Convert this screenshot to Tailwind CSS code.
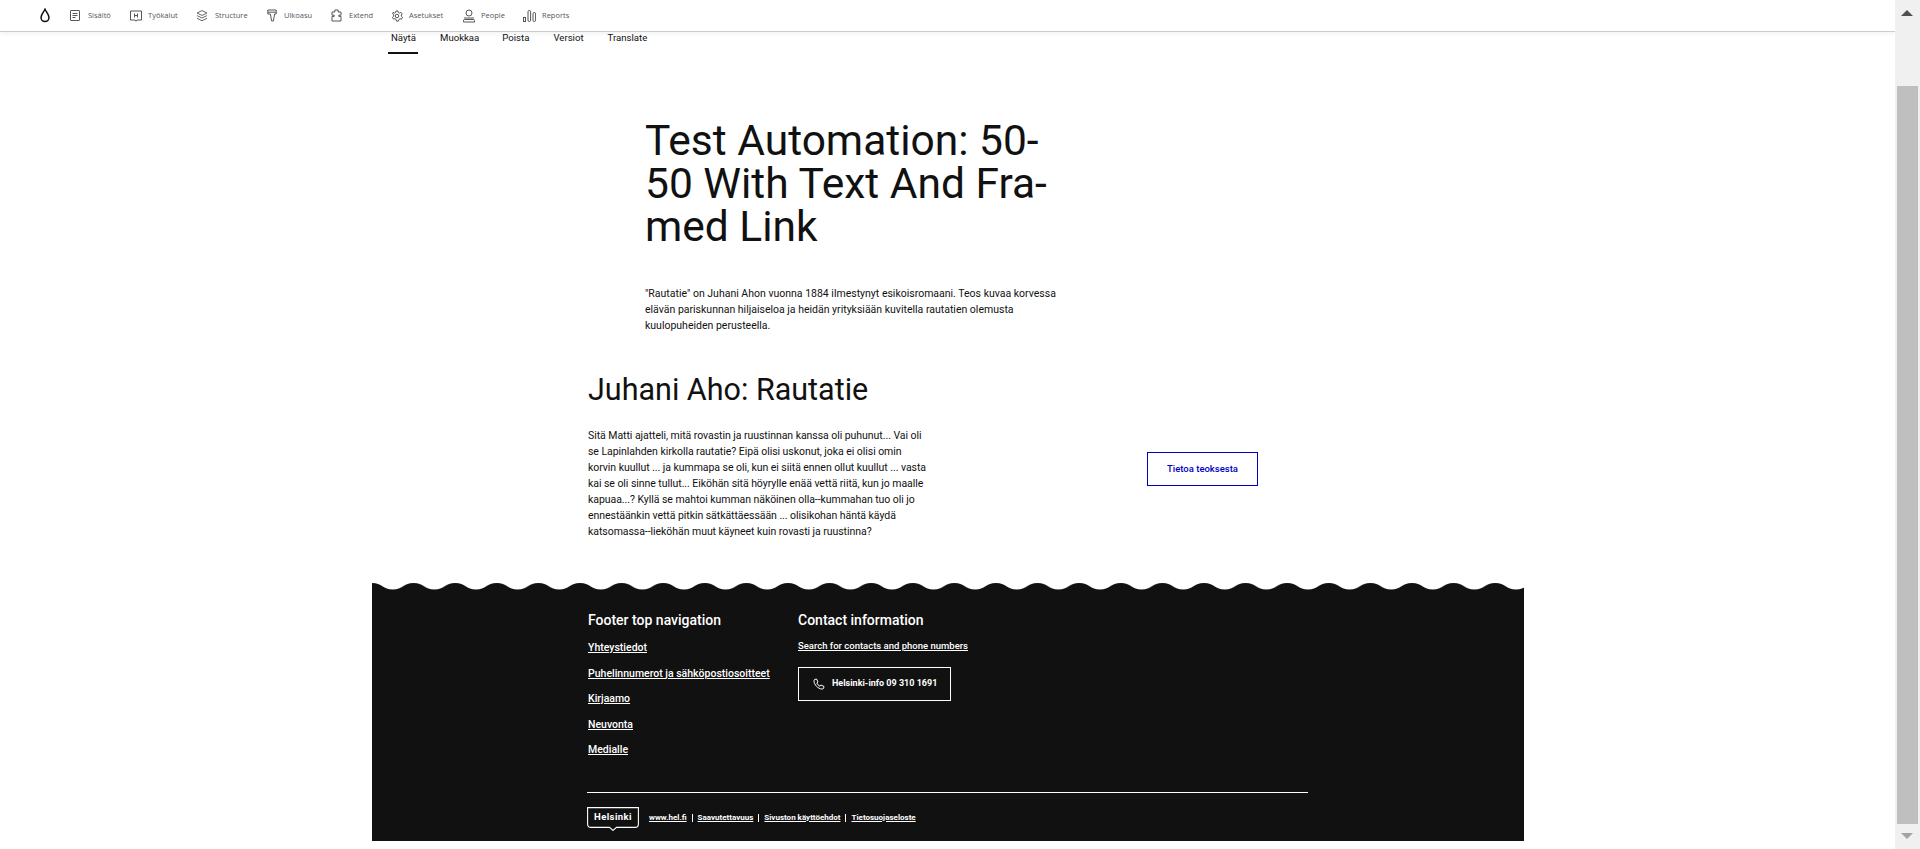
<!DOCTYPE html>
<html lang="fi">
<head>
<meta charset="utf-8">
<title>Test Automation: 50-50 With Text And Framed Link</title>
<script src="https://cdn.jsdelivr.net/npm/@tailwindcss/browser@4"></script>
</head>
<body class="h-[849px] overflow-hidden bg-white font-['Roboto',sans-serif] text-[#111]">
<div class="flex h-[849px]">
    <div class="flex-1 min-w-0 flex flex-col">
        <!-- Admin toolbar -->
        <nav class="h-[32px] shrink-0 flex items-center pl-[40px] border-b border-[#ccc] shadow-[0_2px_4px_rgba(0,0,0,0.05)] font-['Open_Sans',sans-serif] text-[7.5px] text-[#55565b]">
            <svg class="w-[10px] h-[15px] mr-[20px]" viewBox="0 0 10 15" fill="none" stroke="#111" stroke-width="1.5"><path d="M5 1.2C3.8 4 1 6.4 1 9.6a4 4 0 0 0 8 0C9 6.4 6.2 4 5 1.2z"/></svg>
            <a class="w-[60px] flex items-center gap-[8px]">
                <svg class="w-[10px] h-[11px]" viewBox="0 0 10 11" fill="none" stroke="#55565b"><rect x=".5" y=".5" width="9" height="10" rx=".5"/><path d="M2.5 3.5h5M2.5 5.5h5M2.5 7.5h3"/></svg>
                Sisältö
            </a>
            <a class="w-[66px] flex items-center gap-[6px]">
                <svg class="w-[12px] h-[12px]" viewBox="0 0 12 12" fill="none" stroke="#55565b"><path d="M.5 1h11v9H7l-1 1.2L5 10H.5z"/><path d="M4.5 3.5v4M7.5 3.5v4M4.5 5.5h3"/></svg>
                Työkalut
            </a>
            <a class="w-[71px] flex items-center gap-[7px]">
                <svg class="w-[12px] h-[12px]" viewBox="0 0 12 12" fill="none" stroke="#55565b" stroke-width=".9"><path d="M6 .6 11 3 6 5.4 1 3zM1 5.6l5 2.4 5-2.4M1 8.2l5 2.6 5-2.6"/></svg>
                Structure
            </a>
            <a class="w-[63px] flex items-center gap-[7px]">
                <svg class="w-[10px] h-[13px]" viewBox="0 0 10 13" fill="none" stroke="#55565b"><path d="M.8 1h8.4v4H7.6L6.4 12H4.6L3.4 5H.8zM1 3.2h8"/></svg>
                Ulkoasu
            </a>
            <a class="w-[61px] flex items-center gap-[6px]">
                <svg class="w-[13px] h-[13px]" viewBox="0 0 13 13" fill="none" stroke="#55565b"><path d="M4.8 3V1h3.4v2H11v3.2H8.8v1.2H11v4.6H2V7.4h2.2V6.2H2V3z"/></svg>
                Extend
            </a>
            <a class="w-[71px] flex items-center gap-[6px]">
                <svg class="w-[12px] h-[12px]" viewBox="0 0 24 24" fill="none" stroke="#55565b" stroke-width="2"><circle cx="12" cy="12" r="3.5"/><path d="M10 2h4l.6 3 2.6 1.2 2.7-1.6 2.6 3.2-2 2.2.3 2.8 2.2 1.8-2 3.6-3-.8-2.3 1.8-.7 3h-4l-.7-3-2.4-1.8-3 .8-2-3.6 2.3-1.8.3-2.8-2-2.2L4 4.6l2.8 1.6L9.4 5z"/></svg>
                Asetukset
            </a>
            <a class="w-[61px] flex items-center gap-[5px]">
                <svg class="w-[14px] h-[14px]" viewBox="0 0 14 14" fill="none" stroke="#55565b"><circle cx="7" cy="4" r="3"/><path d="M2 9h10M1.5 13v-1.5a1 1 0 0 1 1-1h9a1 1 0 0 1 1 1V13z"/></svg>
                People
            </a>
            <a class="flex items-center gap-[6px]">
                <svg class="w-[13px] h-[13px]" viewBox="0 0 13 13" fill="none" stroke="#55565b"><rect x=".5" y="8.5" width="2" height="4"/><rect x="5" y="1.5" width="2.6" height="11" rx="1.3"/><rect x="10" y="3.5" width="2.6" height="9" rx="1.3"/></svg>
                Reports
            </a>
        </nav>

        <!-- Local tasks -->
        <ul class="h-[22px] shrink-0 flex items-start pl-[388px] text-[9.6px] leading-[12px]">
            <li class="w-[30px] mr-[22px] h-[22px] pl-[3px] border-b-2 border-[#111]">Näytä</li>
            <li class="mr-[23px]">Muokkaa</li>
            <li class="mr-[24px]">Poista</li>
            <li class="mr-[24px]">Versiot</li>
            <li>Translate</li>
        </ul>

        <main class="flex-1 flex flex-col">
            <!-- Page header -->
            <div class="ml-[645px] w-[430px] pt-[65px]">
                <h1 class="text-[42.5px] leading-[43px] font-normal">Test Automation: 50-<br>50 With Text And Fra-<br>med Link</h1>
                <p class="mt-[38px] text-[10.5px] leading-[16px] whitespace-nowrap">"Rautatie" on Juhani Ahon vuonna 1884 ilmestynyt esikoisromaani. Teos kuvaa korvessa<br>elävän pariskunnan hiljaiseloa ja heidän yrityksiään kuvitella rautatien olemusta<br>kuulopuheiden perusteella.</p>
            </div>

            <!-- 50-50 paragraph -->
            <div class="ml-[588px] w-[670px] mt-[38px]">
                <h2 class="text-[30.5px] leading-[36px] font-normal">Juhani Aho: Rautatie</h2>
                <div class="mt-[20px] flex items-start justify-between">
                    <p class="w-[350px] text-[10.5px] leading-[16px] tracking-[-0.05px] whitespace-nowrap">Sitä Matti ajatteli, mitä rovastin ja ruustinnan kanssa oli puhunut... Vai oli<br>se Lapinlahden kirkolla rautatie? Eipä olisi uskonut, joka ei olisi omin<br>korvin kuullut ... ja kummapa se oli, kun ei siitä ennen ollut kuullut ... vasta<br>kai se oli sinne tullut... Eiköhän sitä höyrylle enää vettä riitä, kun jo maalle<br>kapuaa...? Kyllä se mahtoi kumman näköinen olla--kummahan tuo oli jo<br>ennestäänkin vettä pitkin sätkättäessään ... olisikohan häntä käydä<br>katsomassa--lieköhän muut käyneet kuin rovasti ja ruustinna?</p>
                    <a class="mt-[24px] w-[111px] h-[34px] flex items-center justify-center border-[1.5px] border-[#0000bf] text-[#0000bf] text-[9.5px] font-medium">Tietoa teoksesta</a>
                </div>
            </div>

            <!-- Footer -->
            <footer class="relative mt-[51px] ml-[372px] w-[1152px] h-[250px] bg-[#111] text-white">
                <svg class="absolute left-0 top-[-9px] w-[1152px] h-[10px]" viewBox="0 0 1152 10"><defs><pattern id="wave" width="41.6" height="10" patternUnits="userSpaceOnUse"><path d="M0 1C10 1 11 7.5 20.8 7.5S31.6 1 41.6 1V10H0z" fill="#111"/></pattern></defs><rect width="1152" height="10" fill="url(#wave)"/></svg>
                <div class="ml-[216px] w-[720px] flex pt-[20px]">
                    <div class="w-[210px]">
                        <h2 class="text-[14px] leading-[18px] font-medium">Footer top navigation</h2>
                        <ul class="mt-[11px] flex flex-col gap-[9.5px] text-[10.5px] leading-[16px] font-medium">
                            <li><a class="underline">Yhteystiedot</a></li>
                            <li><a class="underline">Puhelinnumerot ja sähköpostiosoitteet</a></li>
                            <li><a class="underline">Kirjaamo</a></li>
                            <li><a class="underline">Neuvonta</a></li>
                            <li><a class="underline">Medialle</a></li>
                        </ul>
                    </div>
                    <div>
                        <h2 class="text-[14px] leading-[18px] font-medium">Contact information</h2>
                        <a class="block mt-[9px] text-[9.5px] leading-[16px] font-medium underline">Search for contacts and phone numbers</a>
                        <a class="mt-[13px] w-[153px] h-[34px] flex items-center pl-[14px] gap-[7px] border border-white text-[9px] font-bold">
                            <svg class="w-[12px] h-[12px]" viewBox="0 0 24 24" fill="none" stroke="#fff" stroke-width="2"><path d="M3 3l4-1 3 6-2.5 2a14 14 0 0 0 6.5 6.5l2-2.5 6 3-1 4c-1 1-2 1-3 1C10 22 2 13 2 6c0-1 0-2 1-3z"/></svg>
                            Helsinki-info 09 310 1691
                        </a>
                    </div>
                </div>
                <div class="absolute left-[215px] top-[201px] w-[721px] border-t border-white"></div>
                <div class="absolute left-[215px] top-[216px] flex items-start">
                    <div class="relative w-[52px] h-[24px] pb-[3px] flex items-center justify-center text-[9.5px] font-bold tracking-[0.4px]">
                        <svg class="absolute inset-0 w-[52px] h-[24px]" viewBox="0 0 52 24" fill="none" stroke="#fff" stroke-width="1.1"><path d="M.6.6H51.4V17Q51.4 20.4 48 20.4H29.5L26 23.4 22.5 20.4H4Q.6 20.4.6 17Z"/></svg>
                        Helsinki
                    </div>
                    <div class="ml-[10px] h-[21px] flex items-center text-[8px] font-bold">
                        <a class="underline">www.hel.fi</a>
                        <span class="mx-[5px] w-px h-[8px] bg-white"></span>
                        <a class="underline">Saavutettavuus</a>
                        <span class="mx-[5px] w-px h-[8px] bg-white"></span>
                        <a class="underline">Sivuston käyttöehdot</a>
                        <span class="mx-[5px] w-px h-[8px] bg-white"></span>
                        <a class="underline">Tietosuojaseloste</a>
                    </div>
                </div>
            </footer>
        </main>
    </div>

    <!-- Scrollbar -->
    <aside class="relative w-[25px] shrink-0 bg-[#f0f0f0]">
        <div class="absolute left-[6px] top-[10px] w-0 h-0 border-x-[6px] border-x-transparent border-b-[6px] border-b-[#505050]"></div>
        <div class="absolute left-[2px] top-[86px] w-[21px] h-[738px] bg-[#bfbfbf]"></div>
        <div class="absolute left-[6px] top-[833px] w-0 h-0 border-x-[6px] border-x-transparent border-t-[6px] border-t-[#a3a3a3]"></div>
    </aside>
</div>
</body>
</html>
